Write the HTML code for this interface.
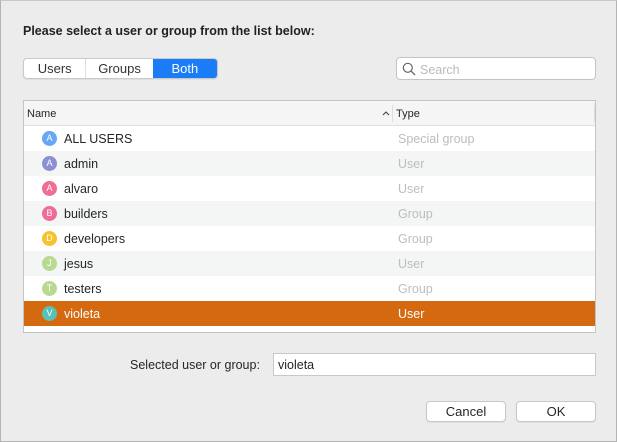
<!DOCTYPE html>
<html><head><style>
*{box-sizing:border-box;margin:0;padding:0}
body{width:617px;height:442px;background:#ececec;font-family:"Liberation Sans",sans-serif;font-size:12px;color:#262626;position:relative;overflow:hidden}
.win{position:absolute;left:0;top:0;width:617px;height:442px;border:1px solid #b4b4b4;border-top:1px solid #c8c8c8}
.abs{position:absolute}
.title{left:23px;top:23px;font-weight:bold;font-size:12.5px;color:#222}
.seg{left:23px;top:58px;width:195px;height:21px;border:1px solid #c9c9c9;border-radius:4px;background:#fff;display:flex;overflow:hidden;box-shadow:0 0.5px 1px rgba(0,0,0,.1)}
.seg div{height:100%;display:flex;align-items:center;justify-content:center;font-size:13px;color:#333}
.search{left:396px;top:57px;width:200px;height:23px;background:#fff;border:1px solid #c4c4c4;border-radius:4px}
.tbl{left:23px;top:100px;width:573px;height:233px;border:1px solid #c4c4c4;background:#fff}
.hdr{position:absolute;left:0;top:0;width:571px;height:25px;background:#f5f5f5;border-bottom:1px solid #e0e0e0;font-size:11px}
.row{position:absolute;left:0;width:571px;height:25px;font-size:12.5px}
.row .av{position:absolute;left:18px;top:5px;width:15px;height:15px;border-radius:50%;color:#fff;font-size:9px;text-align:center;line-height:15px}
.row .n{position:absolute;left:40px;top:6px}
.row .t{position:absolute;left:374px;top:6px;color:#bdbdbd}
.alt{background:#f4f5f5}
.sel{background:#d56910;color:#fff}
.sel .t{color:#fff}
.btn{height:21px;width:80px;background:#fff;border:1px solid #c8c8c8;border-radius:4px;text-align:center;line-height:19px;font-size:13px;box-shadow:0 0.5px 1px rgba(0,0,0,.1)}
</style></head><body>
<div class="win"></div>
<div class="abs title" style="top:24px">Please select a user or group from the list below:</div>
<div class="abs seg"><div style="width:63px;border-right:1px solid #ddd">Users</div><div style="width:67px">Groups</div><div style="width:65px;background:#1b7cf8;color:#fff">Both</div></div>
<div class="abs search">
<svg class="abs" style="left:5px;top:4px" width="14" height="14" viewBox="0 0 14 14"><circle cx="5.8" cy="5.8" r="4.5" fill="none" stroke="#666" stroke-width="1.2"/><path d="M9.2 9.2L13 13" stroke="#666" stroke-width="1.3"/></svg>
<span class="abs" style="left:23px;top:5px;color:#bbb;font-size:12.5px">Search</span></div>
<div class="abs tbl">
<div class="hdr"><span class="abs" style="left:3px;top:7px">Name</span><svg class="abs" style="left:358px;top:10px" width="8" height="5" viewBox="0 0 8 5"><path d="M1 4L4 1L7 4" fill="none" stroke="#444" stroke-width="1.1"/></svg><div class="abs" style="left:368px;top:4px;width:1px;height:17px;background:#ddd"></div><span class="abs" style="left:372px;top:7px">Type</span><div class="abs" style="left:570px;top:4px;width:1px;height:17px;background:#ddd"></div></div>
<div class="row" style="top:25px"><div class="av" style="background:#68a6f6">A</div><span class="n">ALL USERS</span><span class="t">Special group</span></div>
<div class="row alt" style="top:50px"><div class="av" style="background:#8b90d2">A</div><span class="n">admin</span><span class="t">User</span></div>
<div class="row" style="top:75px"><div class="av" style="background:#f06e93">A</div><span class="n">alvaro</span><span class="t">User</span></div>
<div class="row alt" style="top:100px"><div class="av" style="background:#ee6c97">B</div><span class="n">builders</span><span class="t">Group</span></div>
<div class="row" style="top:125px"><div class="av" style="background:#f8c130">D</div><span class="n">developers</span><span class="t">Group</span></div>
<div class="row alt" style="top:150px"><div class="av" style="background:#b8da90">J</div><span class="n">jesus</span><span class="t">User</span></div>
<div class="row" style="top:175px"><div class="av" style="background:#b8da90">T</div><span class="n">testers</span><span class="t">Group</span></div>
<div class="row sel" style="top:200px"><div class="av" style="background:#58c2b8">V</div><span class="n">violeta</span><span class="t">User</span></div>
</div>
<div class="abs" style="left:130px;top:358px;font-size:12.5px">Selected user or group:</div>
<div class="abs" style="left:273px;top:353px;width:323px;height:23px;background:#fff;border:1px solid #c8c8c8;padding:4px 0 0 4px;font-size:12.5px">violeta</div>
<div class="abs btn" style="left:426px;top:401px">Cancel</div>
<div class="abs btn" style="left:516px;top:401px">OK</div>
</body></html>
